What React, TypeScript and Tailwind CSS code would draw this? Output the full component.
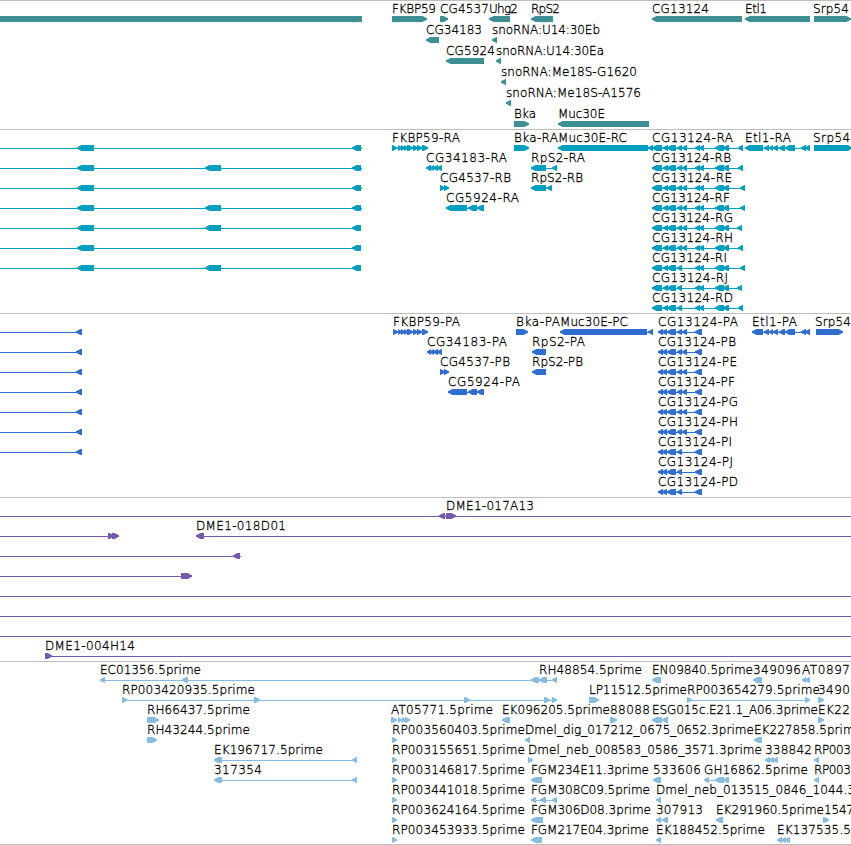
type Dir = "l" | "r";

interface Feature {
  row: number;
  dir?: Dir;
  label?: string;
  // x range covered by the label
  text?: [number, number];
  // connector running behind the exons
  line?: [number, number];
  exons?: [number, number][];
}

interface TrackData {
  name: string;
  color: string;
  pitch: number;
  height: number;
  features: Feature[];
}

const WIDTH = 851;

const genes: Feature[] = [
  { row: 0, dir: "l", exons: [[-20, 362]] },
  { row: 0, dir: "r", label: "FKBP59", text: [392, 436], exons: [[392, 427]] },
  { row: 0, dir: "r", label: "CG4537", text: [440, 489], exons: [[440, 448]] },
  { row: 0, dir: "l", label: "Uhg2", text: [489, 518], exons: [[489, 510]] },
  { row: 0, dir: "l", label: "RpS2", text: [531, 560], exons: [[531, 553]] },
  { row: 0, dir: "l", label: "CG13124", text: [652, 709], exons: [[652, 742]] },
  { row: 0, dir: "l", label: "Etl1", text: [745, 767], exons: [[745, 810]] },
  { row: 0, dir: "r", label: "Srp54", text: [813, 849], exons: [[814, 851]] },
  { row: 1, dir: "l", label: "CG34183", text: [426, 482], exons: [[426, 439]] },
  { row: 1, dir: "l", label: "snoRNA:U14:30Eb", text: [492, 600], exons: [[492, 497]] },
  { row: 2, dir: "l", label: "CG5924", text: [446, 495], exons: [[446, 484]] },
  { row: 2, dir: "l", label: "snoRNA:U14:30Ea", text: [496, 604], exons: [[496, 501]] },
  { row: 3, dir: "l", label: "snoRNA:Me18S-G1620", text: [501, 637], exons: [[501, 506]] },
  { row: 4, dir: "l", label: "snoRNA:Me18S-A1576", text: [506, 641], exons: [[506, 511]] },
  { row: 5, dir: "r", label: "Bka", text: [514, 536], exons: [[514, 529]] },
  { row: 5, dir: "l", label: "Muc30E", text: [558, 605], exons: [[558, 649]] },
];

const cg13124Transcripts: [string, number, number, boolean][] = [
  ["RA", 733, 743, true],
  ["RB", 731, 743, true],
  ["RE", 732, 745, true],
  ["RF", 730, 745, true],
  ["RG", 733, 742, true],
  ["RH", 733, 743, true],
  ["RI", 727, 745, false],
  ["RJ", 728, 742, false],
  ["RD", 733, 743, false],
];

const transcripts: Feature[] = [
  ...[false, true, false, true, true, false, true].map((extra, row): Feature => ({
    row,
    dir: "l",
    line: [0, row < 4 ? 362 : 361],
    exons: extra ? [[77, 94], [205, 221], [352, 361]] : [[77, 94], [352, 361]],
  })),
  {
    row: 0, dir: "r", label: "FKBP59-RA", text: [392, 460], line: [392, 428],
    exons: [[392, 397], [398, 402], [401, 405], [404, 408], [407, 413], [413, 418], [417, 422], [422, 428]],
  },
  { row: 0, dir: "r", label: "Bka-RA", text: [514, 558], exons: [[514, 529]] },
  { row: 0, dir: "l", label: "Muc30E-RC", text: [558, 627], line: [558, 653], exons: [[558, 648], [648, 653]] },
  {
    row: 0, dir: "l", label: "Etl1-RA", text: [745, 791], line: [745, 810],
    exons: [[745, 763], [764, 769], [769, 773], [773, 778], [779, 785], [785, 795], [801, 806], [805, 810]],
  },
  { row: 0, dir: "r", label: "Srp54-", text: [813, 855], exons: [[814, 852]] },
  { row: 1, dir: "l", label: "CG34183-RA", text: [426, 507], exons: [[426, 431], [430, 434], [433, 438], [437, 442]] },
  { row: 1, dir: "l", label: "RpS2-RA", text: [531, 585], line: [531, 557], exons: [[531, 546], [552, 557]] },
  { row: 2, dir: "r", label: "CG4537-RB", text: [440, 511], exons: [[440, 445], [444, 449]] },
  { row: 2, dir: "l", label: "RpS2-RB", text: [531, 583], line: [531, 552], exons: [[531, 546], [547, 552]] },
  { row: 3, dir: "l", label: "CG5924-RA", text: [446, 519], line: [446, 484], exons: [[446, 467], [468, 477], [477, 484]] },
  ...cg13124Transcripts.map(([suffix, textEnd, end, full], row): Feature => ({
    row,
    dir: "l",
    label: `CG13124-${suffix}`,
    text: [652, textEnd],
    line: [652, end],
    exons: [
      [652, 662], [663, 668], [667, 676], [677, 682],
      ...(full ? ([[682, 687]] as [number, number][]) : []),
      [695, 700], [699, 704], [715, 724], [723, 729], [end - 5, end],
    ],
  })),
];

const cg13124Proteins: [string, number, boolean][] = [
  ["PA", 738, true],
  ["PB", 736, true],
  ["PE", 737, true],
  ["PF", 735, true],
  ["PG", 738, true],
  ["PH", 738, true],
  ["PI", 732, false],
  ["PJ", 733, false],
  ["PD", 738, false],
];

const proteins: Feature[] = [
  ...Array.from({ length: 7 }, (_, row): Feature => ({ row, dir: "l", line: [0, 82], exons: [[76, 82]] })),
  {
    row: 0, dir: "r", label: "FKBP59-PA", text: [393, 460], line: [393, 428],
    exons: [[393, 398], [398, 402], [401, 405], [404, 408], [407, 413], [413, 418], [417, 422], [422, 428]],
  },
  { row: 0, dir: "r", label: "Bka-PA", text: [516, 560], exons: [[516, 528]] },
  { row: 0, dir: "l", label: "Muc30E-PC", text: [560, 628], line: [560, 653], exons: [[560, 647], [648, 653]] },
  {
    row: 0, dir: "l", label: "Etl1-PA", text: [752, 797], line: [752, 810],
    exons: [[752, 763], [764, 769], [769, 773], [773, 778], [779, 785], [785, 795], [801, 806], [805, 810]],
  },
  { row: 0, dir: "r", label: "Srp54", text: [815, 851], exons: [[816, 843]] },
  { row: 1, dir: "l", label: "CG34183-PA", text: [427, 507], exons: [[427, 431], [430, 434], [433, 438], [437, 442]] },
  { row: 1, dir: "l", label: "RpS2-PA", text: [532, 585], exons: [[532, 546]] },
  { row: 2, dir: "r", label: "CG4537-PB", text: [440, 510], exons: [[440, 445], [444, 449]] },
  { row: 2, dir: "l", label: "RpS2-PB", text: [532, 583], exons: [[532, 546]] },
  { row: 3, dir: "l", label: "CG5924-PA", text: [448, 520], line: [448, 484], exons: [[448, 467], [468, 477], [477, 484]] },
  ...cg13124Proteins.map(([suffix, textEnd, full], row): Feature => ({
    row,
    dir: "l",
    label: `CG13124-${suffix}`,
    text: [658, textEnd],
    line: [658, 702],
    exons: [
      [658, 663], [662, 667], [667, 676], [677, 682],
      ...(full ? ([[682, 687]] as [number, number][]) : []),
      [695, 702],
    ],
  })),
];

const bacs: Feature[] = [
  { row: 0, dir: "l", line: [0, WIDTH], exons: [[439, 445]] },
  { row: 0, dir: "r", label: "DME1-017A13", text: [446, 534], exons: [[446, 456]] },
  { row: 1, dir: "r", line: [0, 119], exons: [[108, 114], [112, 119]] },
  { row: 1, dir: "l", label: "DME1-018D01", text: [196, 286], line: [196, WIDTH], exons: [[196, 204]] },
  { row: 2, dir: "l", line: [0, 241], exons: [[233, 240]] },
  { row: 3, dir: "r", line: [0, 192], exons: [[181, 192]] },
  { row: 4, line: [0, WIDTH] },
  { row: 5, line: [0, WIDTH] },
  { row: 6, line: [0, WIDTH] },
  { row: 7, dir: "r", label: "DME1-004H14", text: [45, 135], line: [45, WIDTH], exons: [[45, 52]] },
];

const ests: Feature[] = [
  {
    row: 0, dir: "l", label: "EC01356.5prime", text: [100, 201], line: [100, 557],
    exons: [[100, 105], [182, 188], [531, 539], [539, 547], [552, 557]],
  },
  { row: 0, label: "RH48854.5prime", text: [539, 642] },
  { row: 0, dir: "l", label: "EN09840.5prime", text: [652, 753], exons: [[652, 661]] },
  { row: 0, dir: "l", label: "349096", text: [753, 801], exons: [[753, 762]] },
  { row: 0, dir: "l", label: "AT0897", text: [802, 850], exons: [[802, 806], [805, 810]] },
  {
    row: 1, dir: "r", label: "RP003420935.5prime", text: [122, 255], line: [122, 557],
    exons: [[122, 127], [254, 260], [464, 470], [544, 550], [552, 557]],
  },
  { row: 1, dir: "r", label: "LP11512.5prime", text: [589, 687], exons: [[589, 599]] },
  { row: 1, dir: "r", label: "RP003654279.5prime", text: [687, 820], line: [687, 810], exons: [[687, 692], [805, 810]] },
  { row: 1, dir: "r", label: "3490", text: [818, 850], exons: [[818, 824]] },
  { row: 2, dir: "r", label: "RH66437.5prime", text: [147, 250], exons: [[147, 159]] },
  { row: 2, dir: "r", label: "AT05771.5prime", text: [391, 493], exons: [[391, 397], [398, 402], [402, 406], [405, 410]] },
  { row: 2, dir: "l", label: "EK096205.5prime", text: [502, 610], exons: [[502, 510]] },
  { row: 2, dir: "r", label: "88088", text: [610, 650], exons: [[610, 617]] },
  { row: 2, dir: "l", label: "ESG015c.E21.1_A06.3prime", text: [652, 818], exons: [[652, 662], [662, 668]] },
  { row: 2, dir: "r", label: "EK22", text: [818, 850], exons: [[818, 824]] },
  { row: 3, dir: "r", label: "RH43244.5prime", text: [147, 250], exons: [[147, 157]] },
  { row: 3, dir: "r", label: "RP003560403.5prime", text: [392, 525], exons: [[392, 397]] },
  { row: 3, dir: "l", label: "Dmel_dig_017212_0675_0652.3prime", text: [525, 754], exons: [[525, 530]] },
  { row: 3, dir: "l", label: "EK227858.5prime", text: [754, 862], exons: [[754, 762]] },
  { row: 4, dir: "l", label: "EK196717.5prime", text: [214, 323], line: [214, 357], exons: [[214, 222], [352, 357]] },
  { row: 4, dir: "r", label: "RP003155651.5prime", text: [392, 525], exons: [[392, 397]] },
  { row: 4, dir: "r", label: "Dmel_neb_008583_0586_3571.3prime", text: [528, 762], exons: [[528, 533]] },
  { row: 4, dir: "l", label: "338842", text: [765, 812], exons: [[765, 770], [769, 774], [773, 778]] },
  { row: 4, dir: "l", label: "RP003", text: [814, 851], exons: [[814, 819]] },
  { row: 5, dir: "l", label: "317354", text: [214, 262], line: [214, 357], exons: [[214, 222], [352, 357]] },
  { row: 5, dir: "r", label: "RP003146817.5prime", text: [392, 525], exons: [[392, 397]] },
  { row: 5, dir: "l", label: "FGM234E11.3prime", text: [531, 649], exons: [[531, 542]] },
  { row: 5, dir: "l", label: "533606", text: [653, 701], exons: [[653, 661]] },
  { row: 5, dir: "l", label: "GH16862.5prime", text: [704, 808], line: [704, 729], exons: [[704, 709], [715, 724], [723, 729]] },
  { row: 5, dir: "l", label: "RP003", text: [814, 851], exons: [[814, 819]] },
  { row: 6, dir: "r", label: "RP003441018.5prime", text: [392, 525], exons: [[392, 397]] },
  { row: 6, dir: "l", label: "FGM308C09.5prime", text: [531, 650], line: [531, 557], exons: [[531, 536], [540, 546], [552, 557]] },
  { row: 6, dir: "l", label: "Dmel_neb_013515_0846_1044.3", text: [656, 855], exons: [[656, 661]] },
  { row: 7, dir: "r", label: "RP003624164.5prime", text: [392, 525], exons: [[392, 397]] },
  { row: 7, dir: "l", label: "FGM306D08.3prime", text: [531, 651], exons: [[531, 543]] },
  { row: 7, dir: "l", label: "307913", text: [656, 703], line: [656, 668], exons: [[656, 661], [662, 668]] },
  { row: 7, dir: "l", label: "EK291960.5prime", text: [716, 824], exons: [[716, 723]] },
  { row: 7, dir: "r", label: "1547", text: [824, 854], exons: [[823, 829]] },
  { row: 8, dir: "r", label: "RP003453933.5prime", text: [392, 525], exons: [[392, 397]] },
  { row: 8, dir: "l", label: "FGM217E04.3prime", text: [531, 649], exons: [[531, 542]] },
  { row: 8, dir: "l", label: "EK188452.5prime", text: [656, 765], exons: [[656, 661]] },
  { row: 8, dir: "l", label: "EK137535.5", text: [777, 851], exons: [[777, 782], [781, 786], [785, 790]] },
];

const tracks: TrackData[] = [
  { name: "genes", color: "#3d8f94", pitch: 21, height: 128, features: genes },
  { name: "transcripts", color: "#009ebf", pitch: 20, height: 183, features: transcripts },
  { name: "proteins", color: "#316dce", pitch: 20, height: 183, features: proteins },
  { name: "bacs", color: "#7659a8", pitch: 20, height: 163, features: bacs },
  { name: "ests", color: "#87bcde", pitch: 20, height: 182, features: ests },
];

// arrow with a slightly blunt tip, so that short exons stay readable
const exonPoints = ([x1, x2]: [number, number], dir: Dir, y: number) => {
  const head = Math.min(4.5, x2 - x1);
  const [tip, neck, tail] = dir === "l" ? [x1, x1 + head, x2] : [x2, x2 - head, x1];
  return `${tip},${y + 2.3} ${neck},${y} ${tail},${y} ${tail},${y + 6} ${neck},${y + 6} ${tip},${y + 3.7}`;
};

const Track = ({ track }: { track: TrackData }) => {
  return (
    <section className="border-t border-[#bebebe]">
      <svg width={WIDTH} height={track.height} className="block overflow-hidden">
        {track.features.map((feature, i) => {
          const top = feature.row * track.pitch + 15;
          return (
            <g key={`${track.name}-${i}`}>
              {feature.line && (
                <rect
                  x={feature.line[0]}
                  y={top + 3}
                  width={feature.line[1] - feature.line[0]}
                  height={1}
                  fill={track.color}
                />
              )}
              {feature.exons?.map((exon) => (
                <polygon key={exon[0]} points={exonPoints(exon, feature.dir ?? "r", top)} fill={track.color} />
              ))}
              {feature.label && feature.text && (
                <text
                  x={feature.text[0]}
                  y={top - 3}
                  textLength={feature.text[1] - feature.text[0]}
                  className="fill-black stroke-black stroke-[0.3px] font-['DejaVu_Sans',sans-serif] text-[12px] font-extralight"
                >
                  {feature.label}
                </text>
              )}
            </g>
          );
        })}
      </svg>
    </section>
  );
};

const App = () => {
  return (
    <main className="w-[851px] h-[845px] bg-white overflow-hidden border-b border-[#bebebe]">
      {tracks.map((track) => (
        <Track key={track.name} track={track} />
      ))}
    </main>
  );
};

export default App;
